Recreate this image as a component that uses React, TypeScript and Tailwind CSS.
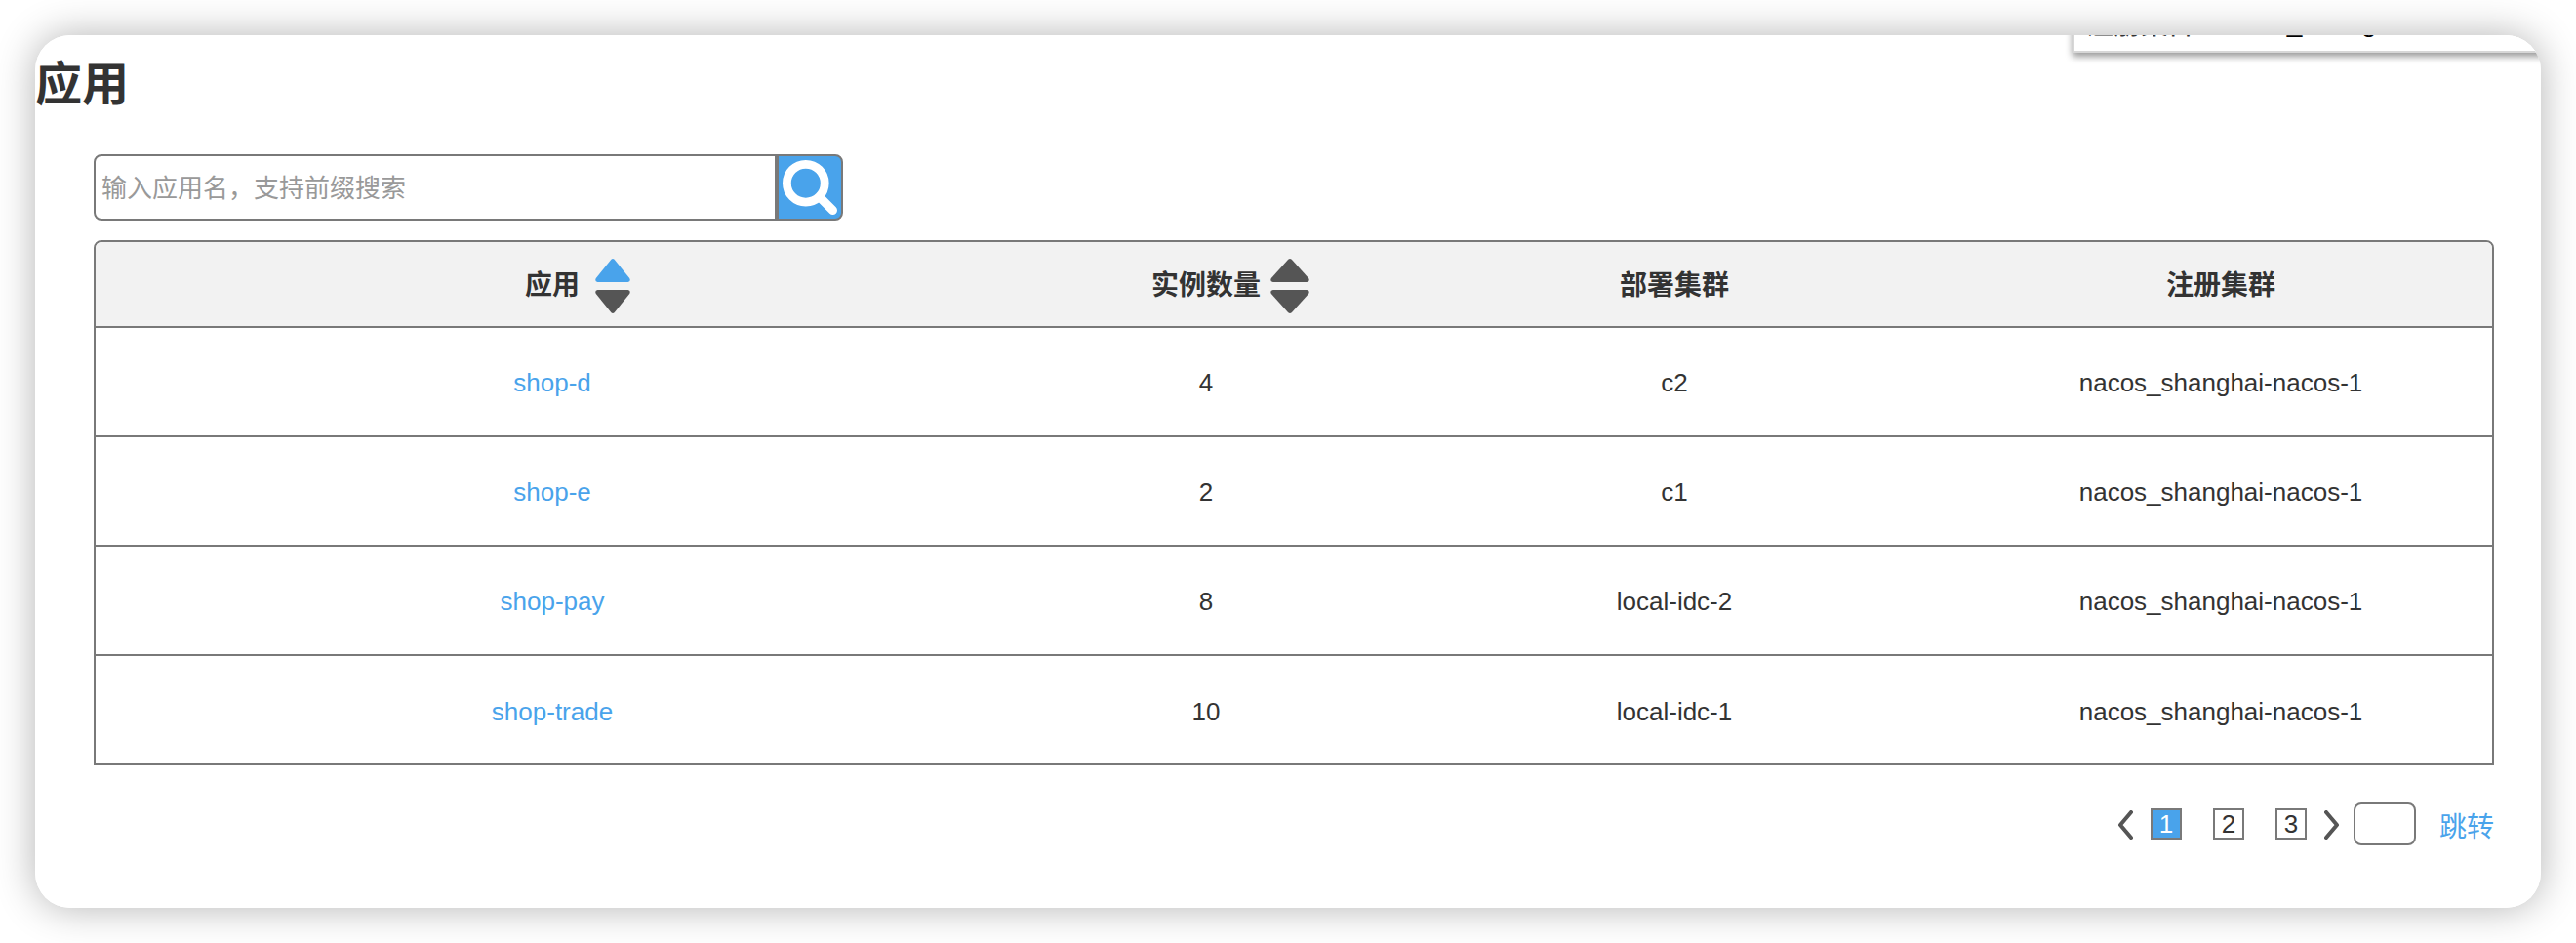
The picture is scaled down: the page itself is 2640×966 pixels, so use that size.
import React from "react";

const sans = "font-['Liberation_Sans','Noto_Sans_CJK_SC',sans-serif]";

const rows = [
  { app: "shop-d", count: 4, deploy: "c2", registry: "nacos_shanghai-nacos-1" },
  { app: "shop-e", count: 2, deploy: "c1", registry: "nacos_shanghai-nacos-1" },
  { app: "shop-pay", count: 8, deploy: "local-idc-2", registry: "nacos_shanghai-nacos-1" },
  { app: "shop-trade", count: 10, deploy: "local-idc-1", registry: "nacos_shanghai-nacos-1" },
];

const grid = "grid grid-cols-[940px_400px_560px_560px] -mx-0.5";

function SortIcon({ width, up, down }: { width: number; up: string; down: string }) {
  return (
    <svg width={width} height="56" viewBox="0 0 36 56" preserveAspectRatio="none">
      <path
        fill={up}
        d="M16.4 0.8 Q18 -0.8 19.6 0.8 L35.2 20 Q36.8 23.4 33.6 24 H2.4 Q-0.8 23.4 0.8 20 Z"
      />
      <path
        fill={down}
        d="M16.4 55.2 Q18 56.8 19.6 55.2 L35.2 36 Q36.8 32.6 33.6 32 H2.4 Q-0.8 32.6 0.8 36 Z"
      />
    </svg>
  );
}

function Chevron({ d }: { d: string }) {
  return (
    <svg width="16" height="30" viewBox="0 0 16 30" fill="none" stroke="#555555" strokeWidth="4" strokeLinecap="round" strokeLinejoin="round">
      <path d={d} />
    </svg>
  );
}

function PageBox({ n, active }: { n: number; active?: boolean }) {
  return (
    <button
      className={
        "flex h-8 w-8 items-center justify-center border-2 border-[#797979] text-[26px] leading-none " +
        (active ? "bg-[#49a3eb] text-white" : "bg-white text-[#333333]")
      }
    >
      {n}
    </button>
  );
}

export default function App() {
  return (
    <div className={"h-[966px] w-[2640px] overflow-hidden bg-white p-9 " + sans}>
      <div className="h-[894px] w-[2568px] rounded-[36px] shadow-[0_0_40px_rgba(0,0,0,0.3)]">
        <main className="relative h-full w-full overflow-hidden rounded-[36px] bg-white text-[#333333]">
          <div className="absolute -top-10 left-[2088px] h-[58px] w-[520px] border-2 border-[#d7d7d7] bg-white shadow-[0_4px_7px_rgba(0,0,0,0.4)]">
            <div className="flex items-start gap-[19px] pl-3 pt-1.5 text-[28px] leading-[38px]">
              <span className="pt-[3px] font-medium text-[#333333]">注册集群</span>
              <span className="text-black">nacos_shanghai</span>
            </div>
          </div>

          <h1 className="pt-[17px] text-[48px] font-bold leading-[68px]">应用</h1>

          <div className="mt-[37px] ml-[60px] flex">
            <input
              placeholder="输入应用名，支持前缀搜索"
              className="h-[68px] w-[700px] rounded-l-lg border-2 border-[#797979] px-1.5 pt-0.5 text-[26px] placeholder:text-[#999999] placeholder:opacity-100"
            />
            <button className="h-[68px] w-[68px] rounded-r-lg border-2 border-[#797979] bg-[#49a3eb]">
              <svg width="64" height="64" viewBox="0 0 64 64" fill="none" stroke="#ffffff">
                <circle cx="27.8" cy="27.7" r="19.4" strokeWidth="8.8" />
                <path d="M42 42 L55.5 55.5" strokeWidth="9" strokeLinecap="round" />
              </svg>
            </button>
          </div>

          <section className="mt-5 ml-[60px] h-[538px] w-[2460px] overflow-hidden rounded-t-lg border-2 border-[#797979] text-[26px]">
            <div className={grid + " h-[88px] border-b-2 border-[#797979] bg-[#f2f2f2] text-[28px] font-bold"}>
              <div className="flex items-center pl-[442px]">
                <span className="pt-1">应用</span>
                <button className="ml-4 mt-[3px]"><SortIcon width={36} up="#49a3eb" down="#555555" /></button>
              </div>
              <div className="flex items-center pl-36">
                <span className="pt-1">实例数量</span>
                <button className="ml-2.5 mt-[3px]"><SortIcon width={40} up="#555555" down="#555555" /></button>
              </div>
              <div className="flex items-center justify-center pt-1">部署集群</div>
              <div className="flex items-center justify-center pt-1">注册集群</div>
            </div>
            {rows.map((r) => (
              <div key={r.app} className={grid + " h-28 items-center border-b-2 border-[#797979] pt-0.5 text-center last:border-b-0"}>
                <a className="text-[#49a3eb]">{r.app}</a>
                <span>{r.count}</span>
                <span>{r.deploy}</span>
                <span>{r.registry}</span>
              </div>
            ))}
          </section>

          <nav className="mt-[38px] mr-12 flex h-11 items-center justify-end">
            <button className="mr-[18px] mt-0.5"><Chevron d="M14 2 L3 15 L14 28" /></button>
            <div className="flex gap-8">
              <PageBox n={1} active />
              <PageBox n={2} />
              <PageBox n={3} />
            </div>
            <button className="ml-[18px] mt-0.5"><Chevron d="M2 2 L13 15 L2 28" /></button>
            <input className="ml-3.5 h-11 w-16 rounded-lg border-2 border-[#797979]" />
            <a className="ml-6 pt-[7px] text-[28px] text-[#49a3eb]">跳转</a>
          </nav>
        </main>
      </div>
    </div>
  );
}
